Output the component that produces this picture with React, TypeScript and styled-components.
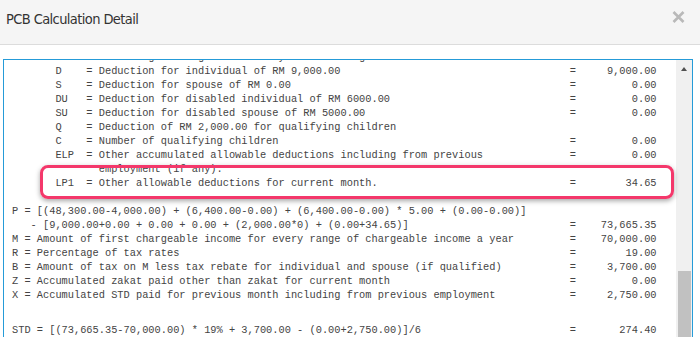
import { useLayoutEffect, useRef } from 'react';
import styled, { createGlobalStyle } from 'styled-components';

type Row = {
  text: string;
  value?: string;
  gap?: boolean;
};

type LineProps = {
  gap?: boolean;
};

const GlobalStyle = createGlobalStyle`
  html, body {
    margin: 0;
    padding: 0;
    overflow: hidden;
    background: #ffffff;
  }
`;

const Dialog = styled.div`
  display: flex;
  flex-direction: column;
  width: 700px;
  height: 337px;
  overflow: hidden;
  background: #ffffff;
`;

const Header = styled.header`
  display: flex;
  justify-content: space-between;
  align-items: flex-start;
  height: 45px;
  padding: 9px 15px 0 6px;
  box-sizing: border-box;
  border-bottom: 1px solid #dcdcdc;
  background: #f5f5f5;
  flex-shrink: 0;
`;

const Title = styled.h4`
  margin: 0;
  font: 400 14.5px/20px 'Liberation Sans Narrow', 'DejaVu Sans Condensed', 'Liberation Sans', sans-serif;
  letter-spacing: -0.6px;
  color: #333333;
`;

const Close = styled.button`
  display: flex;
  margin-top: 2px;
  padding: 0;
  border: none;
  background: none;
  cursor: pointer;
`;

const Body = styled.div`
  padding: 14px 7px 0 3px;
`;

const Box = styled.div`
  position: relative;
  display: flex;
  height: 300px;
  border: 1px solid #259bd8;
`;

const Scroller = styled.div`
  position: relative;
  flex: 1;
  overflow: hidden;
`;

const Pre = styled.div`
  padding: 8px 0 8px 8px;
  font-family: 'Liberation Mono', 'Courier New', monospace;
  font-size: 10.33px;
  line-height: 14px;
  color: #444444;
`;

const Line = styled.div<LineProps>`
  display: flex;
  height: 14px;
  white-space: pre;
  ${({ gap }) => gap && `margin-top: 7px;`}
`;

const Text = styled.span`
  width: 90ch;
  flex-shrink: 0;
`;

const Eq = styled.span`
  width: 1ch;
  flex-shrink: 0;
`;

const Value = styled.span`
  width: 13ch;
  flex-shrink: 0;
  text-align: right;
`;

const ScrollBar = styled.div`
  display: flex;
  flex-direction: column;
  width: 16px;
  background: #f0f0f0;
  flex-shrink: 0;
`;

const Arrow = styled.div<{ down?: boolean }>`
  display: flex;
  justify-content: center;
  align-items: center;
  height: 17px;

  &::before {
    content: '';
    border-left: 3.5px solid transparent;
    border-right: 3.5px solid transparent;
    ${({ down }) => down
      ? 'border-top: 4px solid #505050;'
      : 'border-bottom: 4px solid #505050;'}
  }
`;

const Thumb = styled.div`
  height: 72px;
  margin: auto 1px 0 2px;
  background: #c1c1c1;
`;

const Highlight = styled.div`
  position: absolute;
  left: 36px;
  top: 105px;
  width: 634px;
  height: 34px;
  box-sizing: border-box;
  border: 3px solid #f4386b;
  border-radius: 8px;
  box-shadow: 0 2px 5px rgba(0, 0, 0, 0.35);
  pointer-events: none;
`;

const rows: Row[] = [
  { text: 'PCB = [((P - M) * R + B) - (Z + X)] / (n + 1)' },
  { text: '' },
  { text: 'P = [(Y-K) + (Y1-K1) + [(Y2-K2)*n] + (Yt-Kt)] - [D+S+DU+SU+QC+(LP+LP1)]' },
  { text: '       Y    = Accumulated gross remuneration paid', value: '48,300.00' },
  { text: '       K    = Accumulated EPF contribution paid', value: '4,000.00' },
  { text: '       Y1   = Current month normal remuneration', value: '6,400.00' },
  { text: '       K1   = Current month EPF contribution', value: '0.00' },
  { text: '       n    = Remaining working month in a year excluding current month' },
  { text: '       D    = Deduction for individual of RM 9,000.00', value: '9,000.00' },
  { text: '       S    = Deduction for spouse of RM 0.00', value: '0.00' },
  { text: '       DU   = Deduction for disabled individual of RM 6000.00', value: '0.00' },
  { text: '       SU   = Deduction for disabled spouse of RM 5000.00', value: '0.00' },
  { text: '       Q    = Deduction of RM 2,000.00 for qualifying children' },
  { text: '       C    = Number of qualifying children', value: '0.00' },
  { text: '       ELP  = Other accumulated allowable deductions including from previous', value: '0.00' },
  { text: '              employment (if any).' },
  { text: '       LP1  = Other allowable deductions for current month.', value: '34.65' },
  { text: '' },
  { text: 'P = [(48,300.00-4,000.00) + (6,400.00-0.00) + (6,400.00-0.00) * 5.00 + (0.00-0.00)]' },
  { text: '   - [9,000.00+0.00 + 0.00 + 0.00 + (2,000.00*0) + (0.00+34.65)]', value: '73,665.35' },
  { text: 'M = Amount of first chargeable income for every range of chargeable income a year', value: '70,000.00' },
  { text: 'R = Percentage of tax rates', value: '19.00' },
  { text: 'B = Amount of tax on M less tax rebate for individual and spouse (if qualified)', value: '3,700.00' },
  { text: 'Z = Accumulated zakat paid other than zakat for current month', value: '0.00' },
  { text: 'X = Accumulated STD paid for previous month including from previous employment', value: '2,750.00' },
  { text: '' },
  { text: 'STD = [(73,665.35-70,000.00) * 19% + 3,700.00 - (0.00+2,750.00)]/6', value: '274.40', gap: true },
  { text: '' },
  { text: 'PCB for current month', value: '274.40' },
];

// first fully visible line in the box
const ANCHOR = 8;

const App = () => {
  const scrollerRef = useRef<HTMLDivElement>(null);

  useLayoutEffect(() => {
    const scroller = scrollerRef.current;
    if (!scroller) return;
    const line = scroller.querySelectorAll<HTMLDivElement>('[data-line]')[ANCHOR];
    if (line) scroller.scrollTop = line.offsetTop - 4;
  }, []);

  return (
    <>
      <GlobalStyle />
      <Dialog>
        <Header>
          <Title>PCB Calculation Detail</Title>
          <Close aria-label='Close'>
            <svg width='13' height='12' viewBox='0 0 13 12'>
              <path d='M1.5 1 L11.5 11 M11.5 1 L1.5 11' stroke='#b9b9b9' strokeWidth='2.6' />
            </svg>
          </Close>
        </Header>
        <Body>
          <Box>
            <Scroller ref={scrollerRef}>
              <Pre>
                {rows.map((row, i) => (
                  <Line key={i} gap={row.gap} data-line>
                    <Text>{row.text}</Text>
                    <Eq>{row.value ? '=' : ''}</Eq>
                    <Value>{row.value ?? ''}</Value>
                  </Line>
                ))}
              </Pre>
            </Scroller>
            <ScrollBar>
              <Arrow />
              <Thumb />
              <Arrow down />
            </ScrollBar>
            <Highlight />
          </Box>
        </Body>
      </Dialog>
    </>
  );
};

export default App;
